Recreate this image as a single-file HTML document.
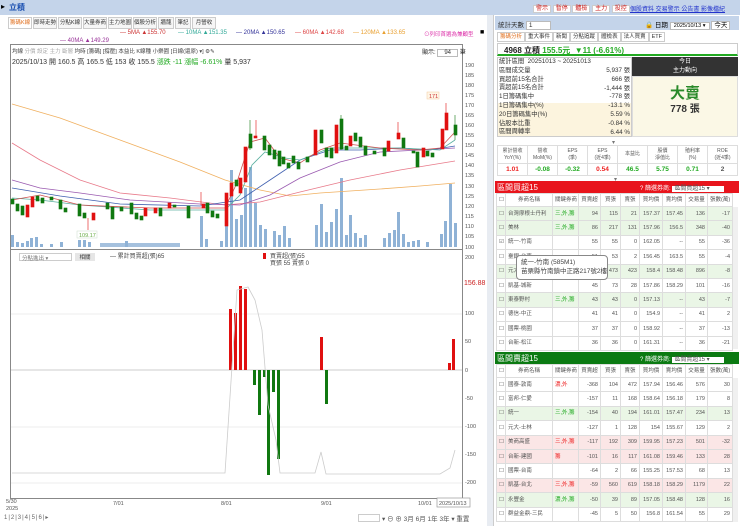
<!DOCTYPE html>
<html><head><meta charset="utf-8"><style>
*{margin:0;padding:0;box-sizing:border-box}
body{width:740px;height:526px;overflow:hidden;background:#fff;font-family:"Liberation Sans","Noto Sans CJK TC",sans-serif;font-size:7px;color:#333;position:relative}
.a{position:absolute;white-space:nowrap}
.tabs{position:absolute;top:17px;left:8px;display:flex}
.tabs div{width:24px;height:12px;border:1px solid #ccc;background:#f6f6f6;font-size:5.5px;line-height:10px;text-align:center;overflow:hidden;white-space:nowrap;margin-right:1px}
table{border-collapse:collapse;position:absolute;font-size:5.5px;table-layout:fixed}
td{border:1px solid #ddd;height:14.4px;line-height:12px;text-align:right;padding:0 2px;color:#555;white-space:nowrap;overflow:hidden}
td.n{text-align:left}
.hd td{text-align:center;height:13px}
.ft td{height:auto;line-height:7px;white-space:normal;text-align:center}
</style></head><body>
<div class="a" style="left:0;top:0;width:740px;height:15px;background:#c4d4ea"></div>
<div class="a" style="left:1px;top:2px;font-size:8px;color:#000">▸</div>
<div class="a" style="left:9px;top:2px;font-size:8px;color:#1a4fb0;font-weight:bold">立積</div>
<div class="a" style="left:487px;top:15px;width:6px;height:511px;background:#e8ecf2"></div>
<div class="tabs"><div style="color:#e07020;background:#fff">籌碼K線</div><div>即時走勢</div><div>分點K線</div><div>大量券商</div><div>主力地圖</div><div>個股分析</div><div style="width:16px">牆龍</div><div style="width:16px">筆記</div><div>月營收</div></div>
<div class="a" style="left:120px;top:30px;font-size:6px;color:#c33">— 5MA ▲155.70</div>
<div class="a" style="left:178px;top:30px;font-size:6px;color:#3a9">— 10MA ▲151.35</div>
<div class="a" style="left:236px;top:30px;font-size:6px;color:#339">— 20MA ▲150.65</div>
<div class="a" style="left:295px;top:30px;font-size:6px;color:#d44">— 60MA ▲142.68</div>
<div class="a" style="left:353px;top:30px;font-size:6px;color:#e9a030">— 120MA ▲133.65</div>
<div class="a" style="left:60px;top:38px;font-size:6px;color:#939">— 40MA ▲149.29</div>
<div class="a" style="left:424px;top:30px;font-size:5.5px;color:#d3a">⊙列印首選為兼顧型</div>
<div class="a" style="left:480px;top:29px;font-size:7px;color:#000">■</div>
<div class="a" style="left:10px;top:44px;width:453px;height:455px;border:1px solid #888"></div>
<div class="a" style="left:10px;top:249px;width:453px;height:1px;background:#888"></div>
<div class="a" style="left:12px;top:47px;font-size:5.5px;color:#444">均線 <span style="color:#aaa">分價 設定 主力 斷層</span> 均時 [籌碼] [撐壓] 本益比 K線種 小樂園 [日線(還原) ▾] ⚙✎</div>
<div class="a" style="left:422px;top:47px;font-size:6px">顯示: <span style="border:1px solid #bbb;padding:0 6px">94</span> 筆</div>
<div class="a" style="left:12px;top:57px;font-size:7px;color:#333">2025/10/13 開 160.5 高 165.5 低 153 收 155.5 <span style="color:#2a2">漲跌 -11 漲幅 -6.61%</span> 量 5,937</div>
<svg class="a" style="left:0;top:0" width="490" height="526">
<g font-size="5.5" fill="#555" font-family="Liberation Sans">
<text x="465" y="67">190</text><text x="465" y="77">185</text><text x="465" y="87">180</text><text x="465" y="97">175</text><text x="465" y="107">170</text><text x="465" y="117">165</text><text x="465" y="127">160</text><text x="465" y="137">155</text><text x="465" y="147">150</text><text x="465" y="157">145</text><text x="465" y="167">140</text><text x="465" y="177">135</text><text x="465" y="188">130</text><text x="465" y="198">125</text><text x="465" y="208">120</text><text x="465" y="218">115</text><text x="465" y="228">110</text><text x="465" y="238">105</text><text x="465" y="249">100</text>
<text x="465" y="259">200</text><text x="465" y="315">100</text><text x="465" y="343">50</text><text x="465" y="372">0</text><text x="465" y="400">-50</text><text x="465" y="428">-100</text><text x="465" y="456">-150</text><text x="465" y="484">-200</text>
<text x="464" y="285" fill="#c22" font-size="7">156.88</text>
<text x="6" y="503">5/30</text><text x="6" y="510">2025</text><text x="113" y="505">7/01</text><text x="221" y="505">8/01</text><text x="321" y="505">9/01</text><text x="418" y="505">10/01</text>
</g>
<rect x="437" y="498" width="33" height="9" fill="#fff" stroke="#999" stroke-width=".7"/><text x="439" y="505" font-size="5.5" fill="#555">2025/10/13</text>
<g stroke="#eee"><line x1="11" y1="314" x2="462" y2="314"/><line x1="11" y1="427" x2="462" y2="427"/><line x1="11" y1="483" x2="462" y2="483"/></g>
<line x1="11" y1="370" x2="462" y2="370" stroke="#999" stroke-width=".6"/>
<g fill="#8fb2d6">
<rect x="11" y="235" width="3" height="12"/><rect x="16" y="242" width="3" height="5"/><rect x="21" y="243" width="3" height="4"/><rect x="26" y="241" width="3" height="6"/><rect x="30" y="238" width="3" height="9"/><rect x="35" y="237" width="3" height="10"/><rect x="40" y="244" width="3" height="3"/><rect x="50" y="244" width="3" height="3"/><rect x="60" y="242" width="3" height="5"/><rect x="78" y="240" width="3" height="7"/><rect x="83" y="240" width="3" height="7"/><rect x="88" y="242" width="3" height="5"/><rect x="125" y="241" width="3" height="6"/><rect x="200" y="216" width="3" height="31"/><rect x="205" y="239" width="3" height="8"/><rect x="220" y="241" width="3" height="6"/><rect x="225" y="215" width="3" height="32"/><rect x="230" y="170" width="3" height="77"/><rect x="235" y="219" width="3" height="28"/><rect x="240" y="215" width="3" height="32"/><rect x="244" y="188" width="3" height="59"/><rect x="249" y="167" width="3" height="80"/><rect x="254" y="203" width="3" height="44"/><rect x="259" y="225" width="3" height="22"/><rect x="264" y="229" width="3" height="18"/><rect x="273" y="231" width="3" height="16"/><rect x="278" y="235" width="3" height="12"/><rect x="283" y="226" width="3" height="21"/><rect x="288" y="238" width="3" height="9"/><rect x="315" y="225" width="3" height="22"/><rect x="320" y="204" width="3" height="43"/><rect x="325" y="232" width="3" height="15"/><rect x="330" y="222" width="3" height="25"/><rect x="335" y="209" width="3" height="38"/><rect x="340" y="178" width="3" height="69"/><rect x="345" y="235" width="3" height="12"/><rect x="349" y="215" width="3" height="32"/><rect x="354" y="233" width="3" height="14"/><rect x="359" y="238" width="3" height="9"/><rect x="364" y="235" width="3" height="12"/><rect x="383" y="238" width="3" height="9"/><rect x="388" y="233" width="3" height="14"/><rect x="393" y="230" width="3" height="17"/><rect x="397" y="212" width="3" height="35"/><rect x="402" y="234" width="3" height="13"/><rect x="407" y="242" width="3" height="5"/><rect x="412" y="241" width="3" height="6"/><rect x="417" y="240" width="3" height="7"/><rect x="426" y="242" width="3" height="5"/><rect x="440" y="234" width="3" height="13"/><rect x="444" y="221" width="3" height="26"/><rect x="449" y="184" width="3" height="63"/><rect x="454" y="223" width="3" height="24"/>
<rect x="100" y="243" width="80" height="4" opacity=".8"/>
</g>
<g fill="none" stroke-width=".8">
<polyline stroke="#f0b060" points="12,104 60,118 120,140 180,162 225,180 260,190 290,196 320,193 380,189 420,186 455,183"/>
<polyline stroke="#e87a8a" points="12,143 40,160 80,180 120,193 170,198 225,205 260,202 300,192 350,180 400,170 455,161"/>
<polyline stroke="#9a5ab0" points="12,180 40,188 80,193 130,200 200,204 240,205 270,195 300,178 340,162 380,152 420,150 455,148"/>
<polyline stroke="#4060b0" points="12,188 60,196 120,204 200,206 240,200 270,180 300,160 330,150 360,150 400,148 430,150 455,146"/>
<polyline stroke="#5bb0a0" points="12,198 40,200 80,205 150,210 225,210 240,195 252,165 265,152 285,158 300,160 330,148 360,148 400,148 440,150 455,140"/>
<polyline stroke="#d05050" points="12,200 40,195 80,205 150,208 225,208 236,185 250,142 265,138 280,158 300,163 320,150 340,143 380,148 420,150 440,148 455,132"/>
</g>
<g stroke-width=".6">
<g fill="#e01010" stroke="#e01010">
<rect x="26" y="205" width="3" height="12"/><rect x="31" y="197" width="3" height="10"/><rect x="92" y="213" width="3" height="7"/><rect x="144" y="208" width="3" height="8"/><rect x="154" y="208" width="3" height="5"/><rect x="168" y="203" width="3" height="5"/><rect x="202" y="204" width="3" height="4"/><rect x="225" y="193" width="3" height="33"/><rect x="230" y="183" width="3" height="13"/><rect x="239" y="178" width="3" height="15"/><rect x="244" y="147" width="3" height="35"/><rect x="254" y="136" width="3" height="2"/><rect x="314" y="130" width="3" height="25"/><rect x="335" y="125" width="3" height="28"/><rect x="349" y="136" width="3" height="10"/><rect x="387" y="141" width="3" height="10"/><rect x="397" y="133" width="3" height="6"/><rect x="422" y="148" width="3" height="9"/><rect x="441" y="129" width="3" height="20"/><rect x="445" y="113" width="3" height="17"/>
<line x1="201" y1="192" x2="201" y2="205"/><line x1="88" y1="218" x2="88" y2="230"/><line x1="256" y1="120" x2="256" y2="137"/><line x1="446" y1="103" x2="446" y2="114"/><line x1="398" y1="122" x2="398" y2="134"/>
</g>
<g fill="#107810" stroke="#107810">
<rect x="11" y="199" width="3" height="5"/><rect x="16" y="204" width="3" height="7"/><rect x="21" y="206" width="3" height="9"/><rect x="36" y="196" width="3" height="5"/><rect x="41" y="198" width="3" height="5"/><rect x="50" y="197" width="3" height="3"/><rect x="59" y="200" width="3" height="9"/><rect x="64" y="208" width="3" height="4"/><rect x="78" y="204" width="3" height="12"/><rect x="83" y="213" width="3" height="5"/><rect x="106" y="203" width="3" height="6"/><rect x="111" y="207" width="3" height="12"/><rect x="120" y="207" width="3" height="4"/><rect x="130" y="203" width="3" height="11"/><rect x="135" y="213" width="3" height="6"/><rect x="140" y="216" width="3" height="4"/><rect x="159" y="208" width="3" height="8"/><rect x="173" y="205" width="3" height="2"/><rect x="187" y="206" width="3" height="12"/><rect x="206" y="203" width="3" height="10"/><rect x="211" y="211" width="3" height="6"/><rect x="216" y="214" width="3" height="4"/><rect x="235" y="180" width="3" height="6"/><rect x="249" y="134" width="3" height="14"/><rect x="263" y="136" width="3" height="14"/><rect x="268" y="145" width="3" height="10"/><rect x="273" y="150" width="3" height="9"/><rect x="278" y="151" width="3" height="15"/><rect x="282" y="157" width="3" height="7"/><rect x="287" y="163" width="3" height="5"/><rect x="292" y="156" width="3" height="7"/><rect x="297" y="162" width="3" height="7"/><rect x="306" y="157" width="3" height="5"/><rect x="320" y="130" width="3" height="13"/><rect x="325" y="148" width="3" height="9"/><rect x="330" y="148" width="3" height="10"/><rect x="340" y="119" width="3" height="30"/><rect x="345" y="146" width="3" height="4"/><rect x="354" y="133" width="3" height="8"/><rect x="359" y="137" width="3" height="10"/><rect x="364" y="146" width="3" height="9"/><rect x="373" y="151" width="3" height="3"/><rect x="383" y="148" width="3" height="8"/><rect x="402" y="138" width="3" height="10"/><rect x="412" y="151" width="3" height="2"/><rect x="416" y="152" width="3" height="15"/><rect x="426" y="151" width="3" height="5"/><rect x="431" y="153" width="3" height="4"/><rect x="454" y="125" width="3" height="10"/>
<line x1="250" y1="120" x2="250" y2="150"/><line x1="341" y1="115" x2="341" y2="150"/><line x1="455" y1="115" x2="455" y2="140"/>
</g></g>
<rect x="427" y="92" width="12" height="7" fill="#fff6e6" stroke="#f3c9a0" stroke-width=".5"/><text x="429" y="98" font-size="5.5" fill="#c33">171</text>
<rect x="77" y="231" width="20" height="7" fill="#fff" stroke="#cdc" stroke-width=".5"/><text x="79" y="237" font-size="5.5" fill="#6a4">109.17</text>
<g fill="#e01010"><rect x="229" y="309" width="3" height="61"/><rect x="234" y="313" width="3" height="57"/><rect x="239" y="286" width="3" height="84"/><rect x="244" y="289" width="3" height="81"/><rect x="320" y="337" width="3" height="33"/><rect x="448" y="363" width="3" height="7"/><rect x="452" y="339" width="3" height="31"/></g>
<g fill="#107810"><rect x="253" y="370" width="3" height="15"/><rect x="258" y="370" width="3" height="45"/><rect x="263" y="370" width="3" height="7"/><rect x="267" y="370" width="3" height="105"/><rect x="272" y="370" width="3" height="22"/><rect x="277" y="370" width="3" height="89"/><rect x="325" y="370" width="3" height="34"/></g>
<polyline fill="none" stroke="#ccc" stroke-width=".8" points="12,473 225,473 237,290 248,287 255,300 262,330 268,405 276,440 280,473 315,473 321,452 326,474 440,474 450,468 455,450"/>
<text x="110" y="258" font-size="6" fill="#444">— 累計買賣超(張)65</text>
<rect x="263" y="253" width="3" height="6" fill="#e01010"/><text x="270" y="258" font-size="6" fill="#444">買賣超(張)55</text>
<text x="270" y="265" font-size="6" fill="#444">買張 55 賣張 0</text>
</svg>
<div class="a" style="left:19px;top:253px;width:53px;height:8px;border:1px solid #ccc;font-size:5.5px;color:#777;padding-left:2px">分點進出 ▾</div>
<div class="a" style="left:75px;top:253px;width:20px;height:8px;background:#e6e6e6;font-size:5.5px;text-align:center">相關</div>
<div class="a" style="left:4px;top:514px;font-size:6px;color:#666;letter-spacing:1px">1|2|3|4|5|6|▸</div>
<div class="a" style="left:358px;top:514px;width:22px;height:8px;border:1px solid #ccc"></div>
<div class="a" style="left:382px;top:513px;font-size:6.5px;color:#555">▾ ⊖ ⊕ 3月 6月 1年 3年 ▾ 重置</div>
<!-- RIGHT -->
<div class="a" style="left:533px;top:3px;font-size:6px;color:#c22"><span style="border:1px solid #ccc;background:#fff;padding:0 2px">警示</span> <span style="border:1px solid #ccc;background:#fff;padding:0 2px">暫停</span> <span style="border:1px solid #ccc;background:#fff;padding:0 2px">體檢</span> <span style="border:1px solid #ccc;background:#fff;padding:0 2px">主力</span> <span style="border:1px solid #ccc;background:#fff;padding:0 2px">投控</span></div>
<div class="a" style="left:630px;top:4px;font-size:6px;color:#23c;text-decoration:underline">個股資料 交易警示 公告書 影像檔紀</div>
<div class="a" style="left:493px;top:15px;width:247px;height:511px;background:#fff;border-left:1px solid #ccc"></div>
<div class="a" style="left:495px;top:16px;width:244px;height:14px;background:#c4d4ea"></div>
<div class="a" style="left:498px;top:19px;font-size:6.5px">統計天數 <span style="background:#fff;border:1px solid #bbb;padding:0 18px 0 2px">1</span></div>
<div class="a" style="left:645px;top:19px;font-size:6.5px;color:#000">🔒 日期 <span style="background:#fff;border:1px solid #bbb;padding:0 3px;font-size:5.5px">2025/10/13 ▾</span> <span style="background:#fff;border:1px solid #bbb;padding:0 2px">今天</span></div>
<div class="a" style="left:497px;top:32px;font-size:5.5px">
<span style="border:1px solid #ccc;padding:1px 2px;color:#e07020">籌碼分析</span><span style="border:1px solid #ccc;padding:1px 2px">重大事件</span><span style="border:1px solid #ccc;padding:1px 2px">新聞</span><span style="border:1px solid #ccc;padding:1px 2px">分點追蹤</span><span style="border:1px solid #ccc;padding:1px 2px">體檢表</span><span style="border:1px solid #ccc;padding:1px 2px">法人買賣</span><span style="border:1px solid #ccc;padding:1px 2px">ETF</span></div>
<div class="a" style="left:497px;top:43px;width:241px;height:13px;border:1px solid #ccc;border-bottom:2px solid #2a2"></div>
<div class="a" style="left:504px;top:45px;font-size:8px;font-weight:bold;color:#222">4968 立積 <span style="color:#2a2">155.5元 &nbsp;▼11 (-6.61%)</span></div>
<div class="a" style="left:497px;top:57px;width:135px;height:80px;border:1px solid #ccc"></div>
<div class="a" style="left:498px;top:103px;width:133px;height:33px;background:#fcf4de"></div>
<div class="a" style="left:499px;top:58px;font-size:6.3px;line-height:8.8px;color:#333">統計區間 &nbsp;20251013 ~ 20251013<br>區間成交量<br>買超前15名合計<br>賣超前15名合計<br>1日籌碼集中<br>1日籌碼集中(%)<br>20日籌碼集中(%)<br>佔股本比重<br>區間周轉率</div>
<div class="a" style="left:595px;top:67px;font-size:6.3px;line-height:8.8px;text-align:right;width:35px">5,937 張<br>666 張<br>-1,444 張<br>-778 張<br>-13.1 %<br>5.59 %<br>-0.84 %<br>6.44 %</div>
<div class="a" style="left:632px;top:57px;width:106px;height:19px;background:#333;color:#fff;font-size:6px;text-align:center;line-height:9px;padding-top:1px">今日<br>主力動向</div>
<div class="a" style="left:632px;top:76px;width:106px;height:61px;background:#fbf8e6;border:1px solid #ddd"></div>
<div class="a" style="left:632px;top:82px;width:106px;text-align:center;font-size:15px;font-weight:bold;color:#2a8a2a">大賣</div>
<div class="a" style="left:632px;top:100px;width:106px;text-align:center;font-size:10px;font-weight:bold;color:#333">778 張</div>
<div class="a" style="left:612px;top:139px;font-size:6px;color:#777">▾</div>
<table class="ft" style="left:497px;top:145px;width:241px;font-size:5px">
<tr><td style="height:18px">累計營收<br>YoY(%)</td><td>營收<br>MoM(%)</td><td>EPS<br>(季)</td><td>EPS<br>(近4季)</td><td>本益比</td><td>股價<br>淨值比</td><td>殖利率<br>(%)</td><td>ROE<br>(近4季)</td></tr>
<tr style="font-weight:bold;font-size:6.5px"><td style="color:#e22;height:12px">1.01</td><td style="color:#2a2">-0.08</td><td style="color:#2a2">-0.32</td><td style="color:#e22">0.54</td><td style="color:#2a2">46.5</td><td style="color:#2a2">5.75</td><td style="color:#2a2">0.71</td><td>2</td></tr></table>
<div class="a" style="left:614px;top:176px;font-size:6px;color:#777">▾</div>
<!-- red table -->
<div class="a" style="left:495px;top:181px;width:244px;height:12px;background:#e8141c"></div>
<div class="a" style="left:497px;top:182px;font-size:8px;color:#fff">區間買超15</div>
<div class="a" style="left:640px;top:183px;font-size:6px;color:#fff">? 篩選券商: <span style="background:#fff;color:#555;padding:0 14px 0 2px">區間買超15 ▾</span></div>
<table style="left:496px;top:193px;width:236px">
<colgroup><col style="width:9px"><col style="width:47px"><col style="width:26px"><col style="width:22px"><col style="width:20px"><col style="width:19px"><col style="width:23px"><col style="width:23px"><col style="width:22px"><col style="width:25px"></colgroup>
<tr class="hd"><td>☐</td><td>券商名稱</td><td>關鍵券商</td><td>買賣超</td><td>買張</td><td>賣張</td><td>買均價</td><td>賣均價</td><td>交易量</td><td>張數(萬)</td></tr>
<tr style="background:#eaf6e6"><td>☐</td><td class="n">台灣摩根士丹利</td><td class="n" style="color:#2a2">三,外,籌</td><td>94</td><td>115</td><td>21</td><td>157.37</td><td>157.45</td><td>136</td><td>-17</td></tr>
<tr style="background:#eaf6e6"><td>☐</td><td class="n">美林</td><td class="n" style="color:#2a2">三,外,籌</td><td>86</td><td>217</td><td>131</td><td>157.96</td><td>156.5</td><td>348</td><td>-40</td></tr>
<tr><td>☑</td><td class="n">統一-竹南</td><td></td><td>55</td><td>55</td><td>0</td><td>162.05</td><td>--</td><td>55</td><td>-36</td></tr>
<tr><td>☐</td><td class="n">臺銀-台南</td><td></td><td>51</td><td>53</td><td>2</td><td>156.45</td><td>163.5</td><td>55</td><td>-4</td></tr>
<tr style="background:#eaf6e6"><td>☐</td><td class="n">元大</td><td></td><td>50</td><td>473</td><td>423</td><td>158.4</td><td>158.48</td><td>896</td><td>-8</td></tr>
<tr><td>☐</td><td class="n">凱基-城新</td><td></td><td>45</td><td>73</td><td>28</td><td>157.86</td><td>158.29</td><td>101</td><td>-16</td></tr>
<tr style="background:#eaf6e6"><td>☐</td><td class="n">東泰野村</td><td class="n" style="color:#2a2">三,外,籌</td><td>43</td><td>43</td><td>0</td><td>157.13</td><td>--</td><td>43</td><td>-7</td></tr>
<tr><td>☐</td><td class="n">德信-中正</td><td></td><td>41</td><td>41</td><td>0</td><td>154.9</td><td>--</td><td>41</td><td>2</td></tr>
<tr><td>☐</td><td class="n">國票-桃園</td><td></td><td>37</td><td>37</td><td>0</td><td>158.92</td><td>--</td><td>37</td><td>-13</td></tr>
<tr><td>☐</td><td class="n">台新-松江</td><td></td><td>36</td><td>36</td><td>0</td><td>161.31</td><td>--</td><td>36</td><td>-21</td></tr></table>
<div class="a" style="left:732px;top:207px;width:6px;height:142px;background:#f0f0f0;border-left:1px solid #ddd"></div>
<div class="a" style="left:516px;top:255px;width:92px;height:25px;background:#fff;border:1px solid #888;border-radius:4px;font-size:6.5px;line-height:9px;padding:2px 4px;color:#444">統一-竹南 (585M1)<br>苗栗縣竹南鎮中正路217號2樓</div>
<!-- green table -->
<div class="a" style="left:495px;top:352px;width:244px;height:12px;background:#0b7a12"></div>
<div class="a" style="left:497px;top:353px;font-size:8px;color:#fff">區間賣超15</div>
<div class="a" style="left:640px;top:354px;font-size:6px;color:#fff">? 篩選券商: <span style="background:#fff;color:#555;padding:0 14px 0 2px">區間賣超15 ▾</span></div>
<table style="left:496px;top:364px;width:236px">
<colgroup><col style="width:9px"><col style="width:47px"><col style="width:26px"><col style="width:22px"><col style="width:20px"><col style="width:19px"><col style="width:23px"><col style="width:23px"><col style="width:22px"><col style="width:25px"></colgroup>
<tr class="hd"><td>☐</td><td>券商名稱</td><td>關鍵券商</td><td>買賣超</td><td>買張</td><td>賣張</td><td>買均價</td><td>賣均價</td><td>交易量</td><td>張數(萬)</td></tr>
<tr><td>☐</td><td class="n">國泰-敦南</td><td class="n" style="color:#e22">濃,外</td><td>-368</td><td>104</td><td>472</td><td>157.94</td><td>156.46</td><td>576</td><td>30</td></tr>
<tr><td>☐</td><td class="n">富邦-仁愛</td><td></td><td>-157</td><td>11</td><td>168</td><td>158.64</td><td>156.18</td><td>179</td><td>8</td></tr>
<tr style="background:#eaf6e6"><td>☐</td><td class="n">統一</td><td class="n" style="color:#2a2">三,外,籌</td><td>-154</td><td>40</td><td>194</td><td>161.01</td><td>157.47</td><td>234</td><td>13</td></tr>
<tr><td>☐</td><td class="n">元大-士林</td><td></td><td>-127</td><td>1</td><td>128</td><td>154</td><td>155.67</td><td>129</td><td>2</td></tr>
<tr style="background:#fbe6e6"><td>☐</td><td class="n">美商高盛</td><td class="n" style="color:#e22">三,外,籌</td><td>-117</td><td>192</td><td>309</td><td>159.95</td><td>157.23</td><td>501</td><td>-32</td></tr>
<tr style="background:#fbe6e6"><td>☐</td><td class="n">台新-建國</td><td class="n" style="color:#e22">籌</td><td>-101</td><td>16</td><td>117</td><td>161.08</td><td>159.46</td><td>133</td><td>28</td></tr>
<tr><td>☐</td><td class="n">國票-台南</td><td></td><td>-64</td><td>2</td><td>66</td><td>155.25</td><td>157.53</td><td>68</td><td>13</td></tr>
<tr style="background:#fbe6e6"><td>☐</td><td class="n">凱基-台北</td><td class="n" style="color:#e22">三,外,籌</td><td>-59</td><td>560</td><td>619</td><td>158.18</td><td>158.29</td><td>1179</td><td>22</td></tr>
<tr style="background:#eaf6e6"><td>☐</td><td class="n">永豐金</td><td class="n" style="color:#2a2">濃,外,籌</td><td>-50</td><td>39</td><td>89</td><td>157.05</td><td>158.48</td><td>128</td><td>16</td></tr>
<tr><td>☐</td><td class="n">群益金鼎-三民</td><td></td><td>-45</td><td>5</td><td>50</td><td>156.8</td><td>161.54</td><td>55</td><td>29</td></tr></table>
<div class="a" style="left:732px;top:378px;width:6px;height:144px;background:#f0f0f0;border-left:1px solid #ddd"></div>
</body></html>
